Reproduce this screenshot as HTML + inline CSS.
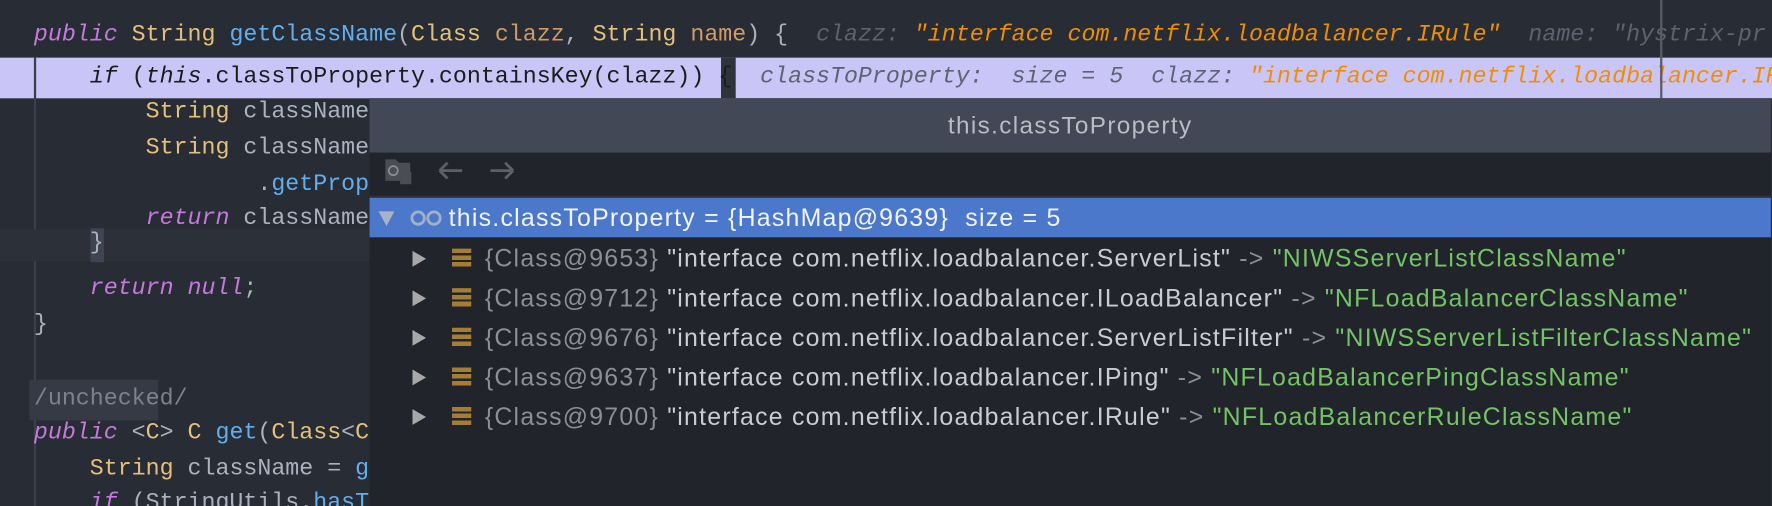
<!DOCTYPE html>
<html><head><meta charset="utf-8"><style>
html,body{margin:0;width:1772px;height:506px;overflow:hidden;background:#282c34;}
#w{position:absolute;left:0;top:0;width:1568px;height:448px;transform:scale(1.1301);transform-origin:0 0;overflow:hidden;background:#282c34;font-family:"Liberation Mono",monospace;}
.l{position:absolute;left:30px;height:32px;line-height:32px;font-size:20.6px;color:#abb2bf;white-space:pre;}
.k{color:#c678dd;font-style:italic}
.t{color:#e5c07b}
.m{color:#61afef}
.p{color:#d19a66}
.h{color:#5c6370;font-style:italic}
.s{color:#f08d05;font-style:italic}
.pop{position:absolute;left:327px;top:87px;width:1240px;height:361px;background:#21242b;font-family:"Liberation Sans",sans-serif;}
.title{height:48px;background:#424855;color:#b9bcc4;font-size:21.5px;letter-spacing:1.2px;text-align:center;line-height:48px;}
.row{position:absolute;left:0;width:1240px;height:35px;line-height:35px;font-size:22px;letter-spacing:1.1px;color:#c9ccd2;white-space:pre;}
.g{color:#8c8f94}.v{color:#74c365}
.tri{position:absolute;left:38px;top:11px;width:0;height:0;border-left:12px solid #a8a8a8;border-top:7px solid transparent;border-bottom:7px solid transparent;}
.ic{position:absolute;left:73px;top:9px;width:17px;height:17px;background:repeating-linear-gradient(#a57e35 0 4px,transparent 4px 6px);}
.tx{position:absolute;left:102px;}
</style></head><body><div id="w">
<div class="l" style="top:16px"><span class="k">public</span> <span class="t">String</span> <span class="m">getClassName</span>(<span class="t">Class</span> <span class="p">clazz</span>, <span class="t">String</span> <span class="p">name</span>) {  <span class="h">clazz: </span><span class="s">"interface com.netflix.loadbalancer.IRule"</span>  <span class="h">name: "hystrix-pr</span></div>
<div style="position:absolute;left:0;top:51px;width:1568px;height:36px;background:#c9c6f7"></div>
<div style="position:absolute;left:30px;top:51px;width:2px;height:397px;background:#3a3f4a"></div>
<div style="position:absolute;left:638px;top:51px;width:13px;height:36px;background:#2f333c"></div>
<div class="l" style="top:53px;color:#1c1c1c"><span style="font-style:italic">    if</span> (<span style="font-style:italic">this</span>.classToProperty.containsKey(clazz)) <span style="color:#1c1c1c">{</span>  <span style="color:#5e6273;font-style:italic">classToProperty:  size = 5  clazz: </span><span class="s">"interface com.netflix.loadbalancer.IRule"</span></div>
<div style="position:absolute;left:1469px;top:0;width:2px;height:87px;background:#5a5d66"></div>
<div class="l" style="top:84px">        <span class="t">String</span> className</div>
<div class="l" style="top:116px">        <span class="t">String</span> className</div>
<div class="l" style="top:148px">                .<span class="m">getProp</span></div>
<div class="l" style="top:178px">        <span class="k">return</span> className</div>
<div style="position:absolute;left:0;top:203px;width:328px;height:28px;background:#2c3039"></div>
<div style="position:absolute;left:80px;top:202px;width:12px;height:30px;background:#3e4451"></div>
<div class="l" style="top:200px">    }</div>
<div class="l" style="top:240px">    <span class="k">return</span> <span class="k">null</span>;</div>
<div class="l" style="top:272px">}</div>
<div style="position:absolute;left:26px;top:336px;width:114px;height:36px;background:#353a45"></div>
<div class="l" style="top:338px;color:#7d828d">/unchecked/</div>
<div class="l" style="top:368px"><span class="k">public</span> &lt;<span class="t">C</span>&gt; <span class="t">C</span> <span class="m">get</span>(<span class="t">Class</span>&lt;<span class="t">C</span></div>
<div class="l" style="top:400px">    <span class="t">String</span> className = <span class="m">g</span></div>
<div class="l" style="top:430px;height:18px;overflow:hidden">    <span class="k">if</span> (StringUtils.<span class="m">hasT</span></div>
<div class="pop">
<div class="title">this.classToProperty</div>
<svg style="position:absolute;left:12px;top:46px" width="130" height="40">
<path d="M2 8h9l3 3h10v10h-8v6H2z" fill="#4a4d53"/><circle cx="9" cy="18" r="4" fill="none" stroke="#8a8d92" stroke-width="1.5"/><rect x="15" y="19" width="10" height="11" fill="#4a4d53"/>
<path d="M50 18h20M50 18l7-7M50 18l7 7" stroke="#5c5f65" stroke-width="2.5" fill="none"/>
<path d="M95 18h20M115 18l-7-7M115 18l-7 7" stroke="#5c5f65" stroke-width="2.5" fill="none"/>
</svg>
<div style="position:absolute;left:0;top:86px;width:1240px;height:2px;background:#2d3038"></div>
<div class="row" style="top:88px;background:#4b78cb;color:#f2f4f8"><div style="position:absolute;left:8px;top:12px;border-top:13px solid #a9b3c6;border-left:7px solid transparent;border-right:7px solid transparent"></div><svg style="position:absolute;left:36px;top:10px" width="30" height="16"><circle cx="7" cy="8" r="5.5" fill="none" stroke="#a3b0c4" stroke-width="2.5"/><circle cx="21" cy="8" r="5.5" fill="none" stroke="#a3b0c4" stroke-width="2.5"/></svg><span style="position:absolute;left:70px">this.classToProperty = {HashMap@9639}  size = 5</span></div>
<div class="row" style="top:124px"><div class="tri"></div><div class="ic"></div><span class="tx"><span class="g">{Class@9653}</span> "interface com.netflix.loadbalancer.ServerList" <span class="g">-&gt;</span> <span class="v">"NIWSServerListClassName"</span></span></div>
<div class="row" style="top:159px"><div class="tri"></div><div class="ic"></div><span class="tx"><span class="g">{Class@9712}</span> "interface com.netflix.loadbalancer.ILoadBalancer" <span class="g">-&gt;</span> <span class="v">"NFLoadBalancerClassName"</span></span></div>
<div class="row" style="top:194px"><div class="tri"></div><div class="ic"></div><span class="tx"><span class="g">{Class@9676}</span> "interface com.netflix.loadbalancer.ServerListFilter" <span class="g">-&gt;</span> <span class="v">"NIWSServerListFilterClassName"</span></span></div>
<div class="row" style="top:229px"><div class="tri"></div><div class="ic"></div><span class="tx"><span class="g">{Class@9637}</span> "interface com.netflix.loadbalancer.IPing" <span class="g">-&gt;</span> <span class="v">"NFLoadBalancerPingClassName"</span></span></div>
<div class="row" style="top:264px"><div class="tri"></div><div class="ic"></div><span class="tx"><span class="g">{Class@9700}</span> "interface com.netflix.loadbalancer.IRule" <span class="g">-&gt;</span> <span class="v">"NFLoadBalancerRuleClassName"</span></span></div>
</div>
</div></body></html>
